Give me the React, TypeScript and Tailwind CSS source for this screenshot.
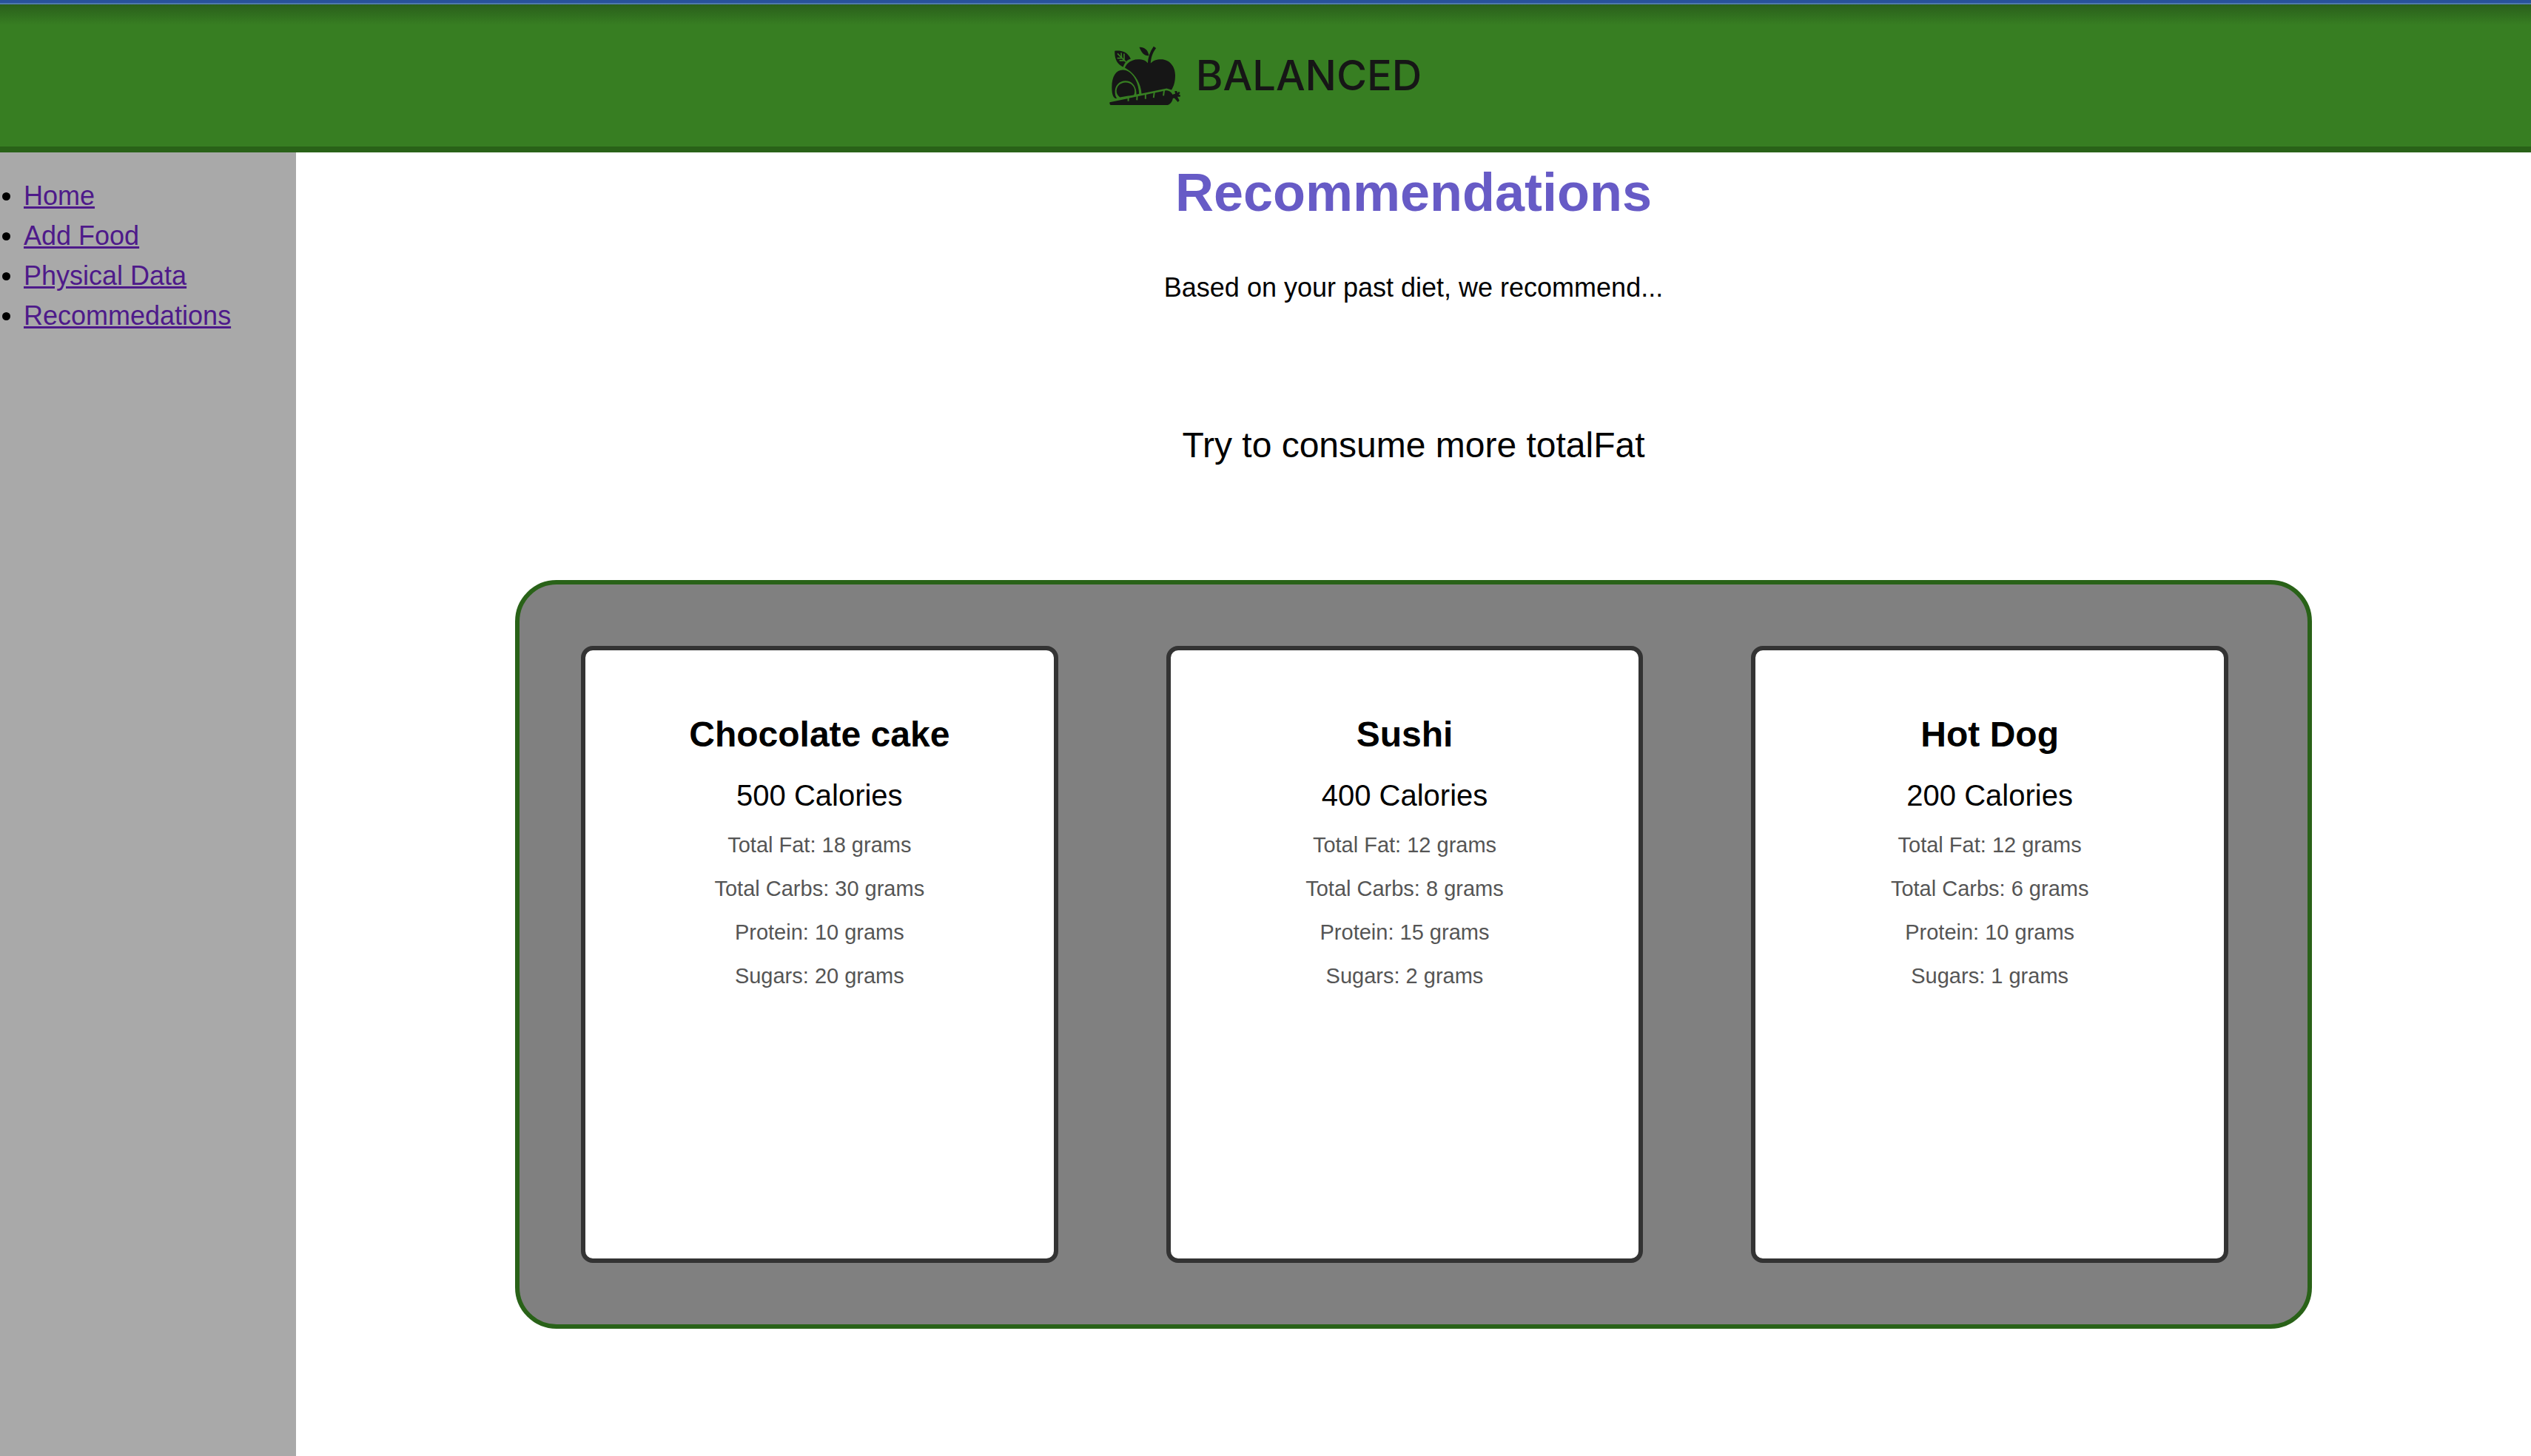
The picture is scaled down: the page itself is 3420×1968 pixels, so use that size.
type Food = {
  name: string;
  calories: number;
  fat: number;
  carbs: number;
  protein: number;
  sugars: number;
};

const foods: Food[] = [
  { name: "Chocolate cake", calories: 500, fat: 18, carbs: 30, protein: 10, sugars: 20 },
  { name: "Sushi", calories: 400, fat: 12, carbs: 8, protein: 15, sugars: 2 },
  { name: "Hot Dog", calories: 200, fat: 12, carbs: 6, protein: 10, sugars: 1 },
];

const links = ["Home", "Add Food", "Physical Data", "Recommedations"];

function FoodMark() {
  return (
    <svg viewBox="54 64 290 244" className="h-[81px] w-[97px]" aria-hidden="true">
      <g fill="#161616">
        {/* apple */}
        <path d="M116 153 C124 132 146 119 170 119 C190 119 203 125 209 134 L222 134 C230 125 244 119 264 119 C297 119 321 147 321 183 C321 207 317 226 306 243 L286 237 L184 258 C180 214 158 176 116 153Z" />
        <path d="M209 136 C210 112 218 88 233 66 L243 73 C229 92 222 112 221 136Z" />
        <path d="M175 69 C196 68 210 80 214 104 C194 104 184 92 175 69Z" />
        {/* leaf */}
        <path d="M75 84 C106 82 125 88 140 117 C128 120 118 126 109 150 C84 138 73 116 75 84Z" />
        {/* avocado */}
        <path d="M78 278 C66 274 63 254 63 232 C63 188 80 162 108 162 C142 162 172 208 174 259 L163 262 C164 228 145 206 119 206 C91 206 75 228 76 252 C76 262 78 270 84 278Z" />
        <path d="M96 273 C86 266 82 257 82 248 C82 228 98 213 119 213 C140 213 156 229 156 249 C156 255 155 260 152 264Z" />
        {/* carrot */}
        <path d="M54 294 L280 246 C296 243 311 254 312 272 C312 288 302 302 290 305 L58 305 C54 303 54 299 54 294Z" />
        <path d="M308 263 L321 259 L319 248 L328 248 L330 256 L336 250 L341 256 L335 262 L342 264 L341 271 L330 271 L338 286 L332 293 L318 277 L310 277Z" />
      </g>
      <g fill="none" stroke="#377e22" strokeWidth="6">
        <path d="M86 95 L120 129 M101 92 L103 112 M85 114 L105 114 M113 96 L113 122 M94 124 L114 123" strokeWidth="5" />
        <path d="M130 275 L130 289 M166 268 L165 285 M200 260 L200 280 M236 252 L233 275 M276 244 L273 267" />
      </g>
    </svg>
  );
}

function FoodCard({ food }: { food: Food }) {
  return (
    <article className="flex min-h-[834px] flex-col items-center gap-4 rounded-2xl border-6 border-[#333333] bg-white pt-[78px]">
      <h2 className="text-[48px] leading-[72px] font-bold">{food.name}</h2>
      <p className="text-[40px] leading-[60px]">{food.calories} Calories</p>
      <p className="text-[29px] leading-[43px] text-[#555555]">Total Fat: {food.fat} grams</p>
      <p className="text-[29px] leading-[43px] text-[#555555]">Total Carbs: {food.carbs} grams</p>
      <p className="text-[29px] leading-[43px] text-[#555555]">Protein: {food.protein} grams</p>
      <p className="text-[29px] leading-[43px] text-[#555555]">Sugars: {food.sugars} grams</p>
    </article>
  );
}

export default function App() {
  return (
    <div className="flex min-h-screen flex-col bg-white font-['Liberation_Sans',Arial,sans-serif] text-black">
      <div className="h-1.5 border-b-2 border-[#4f79ac] bg-[#28529a]" />
      <header className="flex h-[200px] items-center justify-center gap-5 border-b-8 border-[#296218] bg-[#377e22] bg-[linear-gradient(#2a5f1b,#377e22_28px)]">
        <FoodMark />
        <span className="font-[Inter,sans-serif] text-[56px] leading-none font-medium text-[#161616]">BALANCED</span>
      </header>
      <div className="flex grow">
        <nav className="w-[400px] shrink-0 bg-[#a9a9a9] pt-8">
          <ul className="list-disc pl-8 text-[36px] leading-[54px]">
            {links.map((label) => (
              <li key={label}>
                <a href="#" className="text-[#4e1a8a] underline">
                  {label}
                </a>
              </li>
            ))}
          </ul>
        </nav>
        <main className="flex grow flex-col items-center">
          <h1 className="text-[72px] leading-[108px] font-bold text-[#675bc6]">Recommendations</h1>
          <p className="mt-12 text-[36px] leading-[54px]">Based on your past diet, we recommend...</p>
          <p className="mt-[150px] text-[48px] leading-[72px]">Try to consume more totalFat</p>
          <div className="mt-[146px] box-content w-4/5 rounded-[56px] border-6 border-[#296218] bg-[#808080]">
            <section className="grid grid-cols-3 gap-[146px] py-[83px] pr-[107px] pl-[83px]">
              {foods.map((food) => (
                <FoodCard key={food.name} food={food} />
              ))}
            </section>
          </div>
        </main>
      </div>
    </div>
  );
}
